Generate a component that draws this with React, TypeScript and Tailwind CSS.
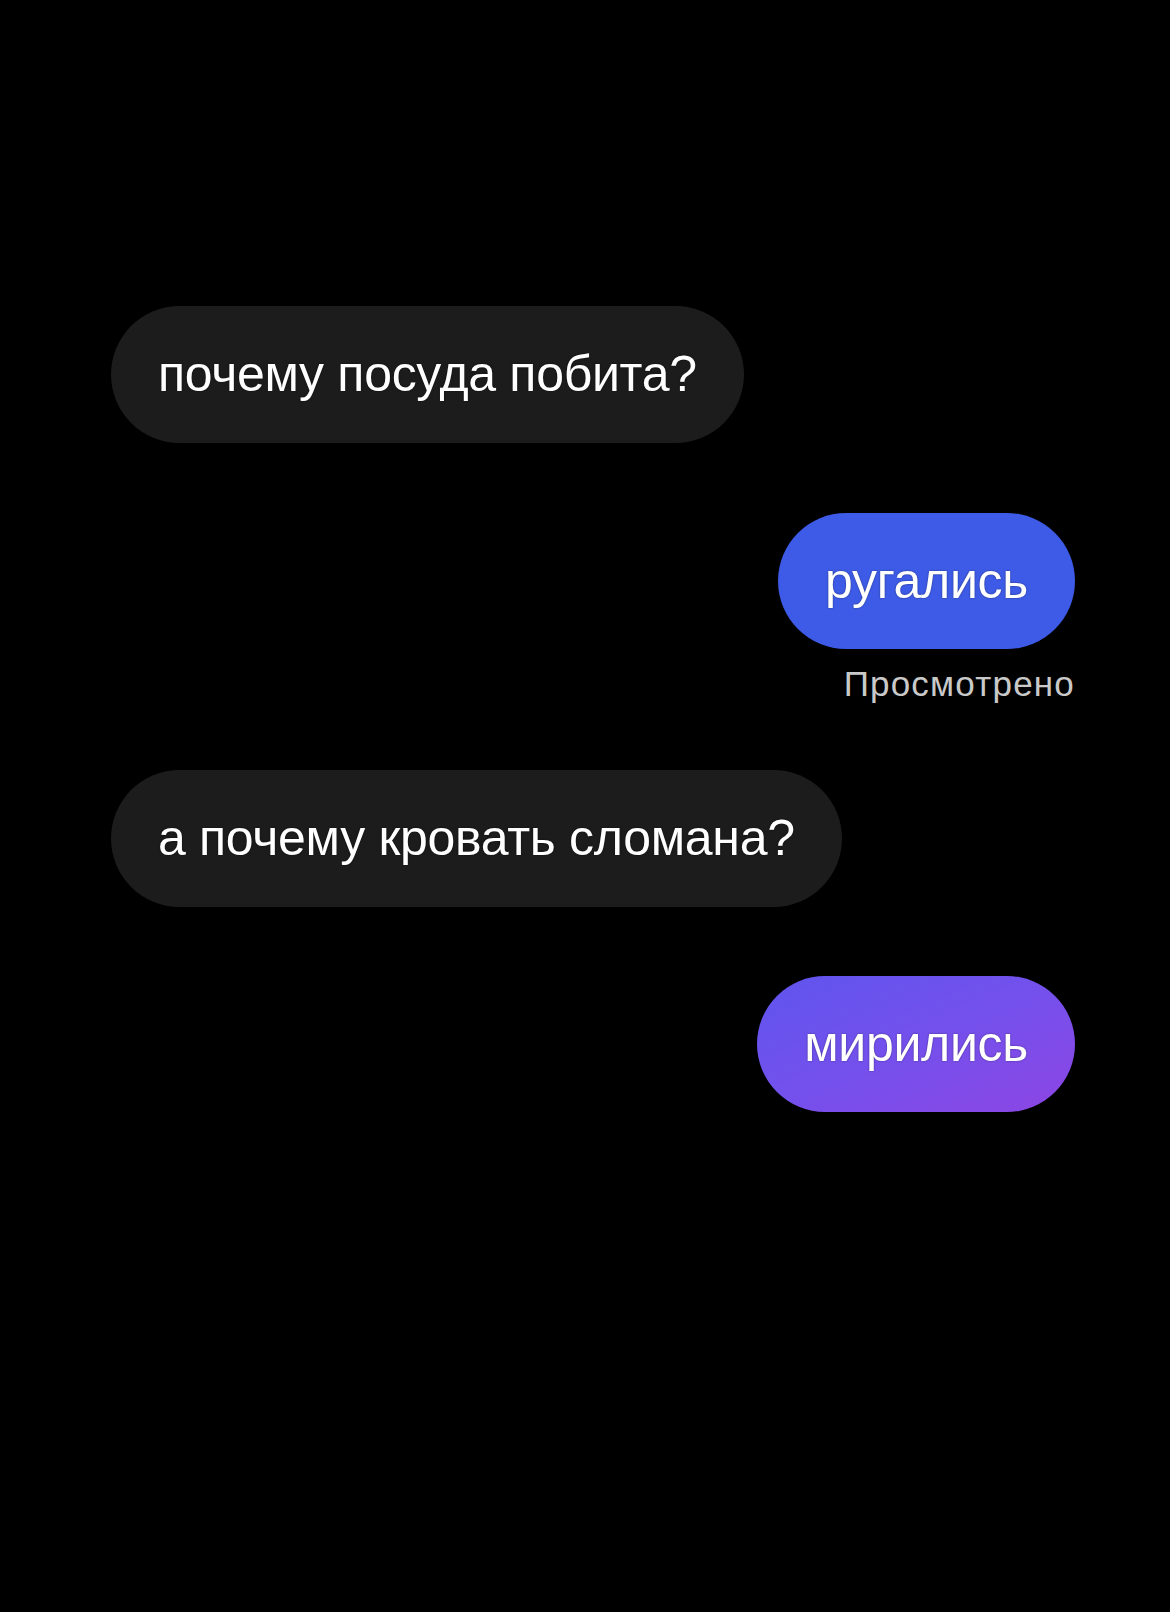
const font = { fontFamily: '"Liberation Sans", Arial, sans-serif' };

function Incoming({ text }: { text: string }) {
  return (
    <div className="flex justify-start">
      <div className="flex h-[137px] items-center rounded-full bg-[#1c1c1c] px-[47px] text-[50px] tracking-[-0.3px] text-white [text-shadow:0_0_2px_rgba(0,0,0,0.6)]">
        {text}
      </div>
    </div>
  );
}

function Outgoing({ text, className }: { text: string; className: string }) {
  return (
    <div className="flex justify-end">
      <div
        className={
          "flex h-[136px] items-center rounded-full px-[47px] text-[50px] tracking-[-0.3px] text-white [text-shadow:0_0_2px_rgba(0,0,0,0.45)] " +
          className
        }
      >
        {text}
      </div>
    </div>
  );
}

export default function App() {
  return (
    <div className="min-h-[1612px] w-[1170px] bg-black pl-[111px] pr-[95px] pt-[306px]" style={font}>
      <Incoming text="почему посуда побита?" />
      <div className="mt-[70px]">
        <Outgoing text="ругались" className="bg-[#3d5be6]" />
        <p className="mt-[17px] text-right text-[35px] leading-[36px] tracking-[1.2px] text-[#c9c9c9]">Просмотрено</p>
      </div>
      <div className="mt-[68px]">
        <Incoming text="а почему кровать сломана?" />
      </div>
      <div className="mt-[69px]">
        <Outgoing text="мирились" className="bg-gradient-to-br from-[#5f55ee] via-[#7450ec] to-[#8c45e4]" />
      </div>
    </div>
  );
}
